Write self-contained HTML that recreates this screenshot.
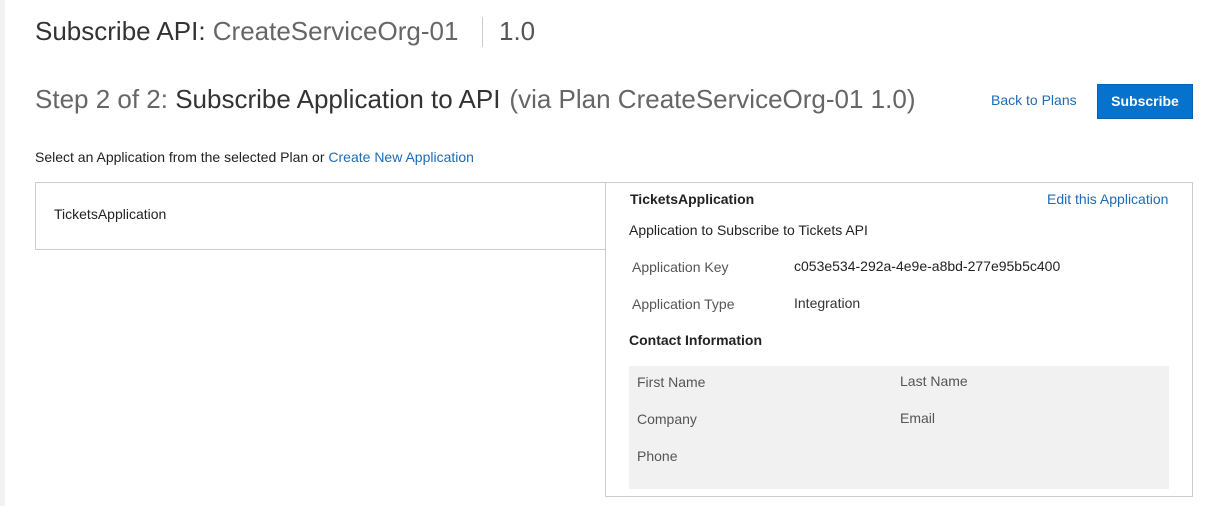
<!DOCTYPE html>
<html><head><style>
*{margin:0;padding:0;box-sizing:border-box}
body{width:1210px;height:506px;background:#fff;font-family:"Liberation Sans",Arial,sans-serif;color:#333;position:relative;overflow:hidden}
.a{position:absolute;white-space:nowrap}
.strip{left:0;top:0;width:5px;height:506px;background:#f2f2f2}
.h1{left:35px;top:16px;font-size:26px;color:#333}
.h1 .l{color:#666}
.sep{left:482px;top:17px;width:1px;height:30px;background:#ccc}
.h2{left:35px;top:84px;font-size:26px;color:#666}
.h2 .d{color:#333}
.link{color:#1f6bb5}
.btn{left:1097px;top:84px;width:96px;height:35px;background:#0572ce;border:1px solid #0a63b0;color:#fff;font-weight:bold;font-size:14px;text-align:center;line-height:33px}
.s{font-size:14px}
.lbox{left:35px;top:182px;width:571px;height:68px;border:1px solid #ccc;border-right:none}
.rbox{left:605px;top:182px;width:588px;height:315px;border:1px solid #ccc}
.gray{left:629px;top:366px;width:540px;height:123px;background:#f1f1f1}
.g{color:#555;font-size:14px}
</style></head><body>
<div class="a strip"></div>
<div class="a h1">Subscribe API: <span class="l">CreateServiceOrg-01</span></div>
<div class="a sep"></div>
<div class="a h1" style="left:499px;color:#555">1.0</div>
<div class="a h2"><span>Step 2 of 2: </span><span class="d">Subscribe Application to API</span><span style="margin-left:9px">(via Plan CreateServiceOrg-01 1.0)</span></div>
<div class="a s link" style="left:991px;top:92px">Back to Plans</div>
<div class="a btn">Subscribe</div>
<div class="a s" style="left:35px;top:149px;color:#222">Select an Application from the selected Plan or <span class="link">Create New Application</span></div>
<div class="a lbox"></div>
<div class="a rbox"></div>
<div class="a s" style="left:54px;top:206px;color:#222">TicketsApplication</div>
<div class="a s" style="left:630px;top:191px;font-weight:bold;color:#222">TicketsApplication</div>
<div class="a s link" style="left:1047px;top:191px">Edit this Application</div>
<div class="a s" style="left:629px;top:222px;color:#222">Application to Subscribe to Tickets API</div>
<div class="a g" style="left:632px;top:259px">Application Key</div>
<div class="a s" style="left:794px;top:258px;color:#222">c053e534-292a-4e9e-a8bd-277e95b5c400</div>
<div class="a g" style="left:632px;top:296px">Application Type</div>
<div class="a s" style="left:794px;top:295px;color:#333">Integration</div>
<div class="a s" style="left:629px;top:332px;font-weight:bold;color:#222">Contact Information</div>
<div class="a gray"></div>
<div class="a g" style="left:637px;top:374px">First Name</div>
<div class="a g" style="left:900px;top:373px">Last Name</div>
<div class="a g" style="left:637px;top:411px">Company</div>
<div class="a g" style="left:900px;top:410px">Email</div>
<div class="a g" style="left:637px;top:448px">Phone</div>
</body></html>
